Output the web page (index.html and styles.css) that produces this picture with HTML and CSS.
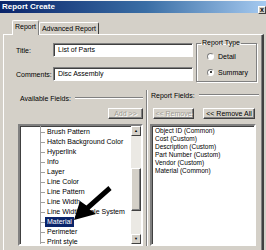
FILE: index.html
```html
<!DOCTYPE html>
<html lang="en">
<head>
    <meta charset="UTF-8">
    <title>Report Create</title>
    <link rel="stylesheet" href="styles.css">
</head>
<body>
    <div class="window">
        <div class="titlebar">
            <span class="title">Report Create</span>
            <span class="close">x</span>
        </div>
        <div class="tabs">
            <div class="tab active">Report</div>
            <div class="tab">Advanced Report</div>
        </div>
        <div class="page">
            <div class="top">
                <div class="fields">
                    <div class="field">
                        <label>Title:</label>
                        <div class="input">List of Parts</div>
                    </div>
                    <div class="field">
                        <label>Comments:</label>
                        <div class="input">Disc Assembly</div>
                    </div>
                </div>
                <fieldset class="group">
                    <legend>Report Type</legend>
                    <div class="radio"><span class="dot"></span>Detail</div>
                    <div class="radio"><span class="dot on"></span>Summary</div>
                </fieldset>
            </div>
            <div class="bottom">
                <div class="panel left">
                    <div class="heading"><span>Available Fields:</span><i class="rule"></i></div>
                    <div class="btnrow end">
                        <button class="btn btn-add" disabled>Add &gt;&gt;</button>
                    </div>
                    <div class="list">
                        <ul class="tree">
                            <li><span>Brush Pattern</span></li>
                            <li><span>Hatch Background Color</span></li>
                            <li><span>Hyperlink</span></li>
                            <li><span>Info</span></li>
                            <li><span>Layer</span></li>
                            <li><span>Line Color</span></li>
                            <li><span>Line Pattern</span></li>
                            <li><span>Line Width</span></li>
                            <li><span>Line Width Scale System</span></li>
                            <li><span class="selected">Material</span></li>
                            <li><span>Perimeter</span></li>
                            <li><span>Print style</span></li>
                        </ul>
                        <div class="scrollbar">
                            <div class="sbtn">&#9650;</div>
                            <div class="track">
                                <div class="thumb"></div>
                            </div>
                            <div class="sbtn">&#9660;</div>
                        </div>
                    </div>
                </div>
                <div class="panel right">
                    <div class="heading"><span>Report Fields:</span><i class="rule"></i></div>
                    <div class="btnrow">
                        <button class="btn btn-remove" disabled>&lt;&lt; Remove</button>
                        <button class="btn btn-remove-all">&lt;&lt; Remove All</button>
                    </div>
                    <div class="list">
                        <ul class="plain">
                            <li>Object ID (Common)</li>
                            <li>Cost (Custom)</li>
                            <li>Description (Custom)</li>
                            <li>Part Number (Custom)</li>
                            <li>Vendor (Custom)</li>
                            <li>Material (Common)</li>
                        </ul>
                    </div>
                </div>
            </div>
        </div>
        <svg class="arrow" width="266" height="250" viewBox="0 0 266 250">
            <polygon points="74,219 80,200 86.4,204.6 108.4,185.1 111.6,188.9 89.6,208.4 96,213" fill="#000"/>
        </svg>
    </div>
</body>
</html>
```

FILE: styles.css
```css
* { box-sizing: border-box; }
body { margin: 0; background: #d4d0c8; font-family: "Liberation Sans", Arial, sans-serif; font-size: 7px; color: #000; }

.window { position: relative; width: 266px; height: 250px; overflow: hidden; background: #d4d0c8; border-top: 1px solid #f4f4f4; }

.titlebar { height: 12px; display: flex; justify-content: space-between; padding-left: 2px; background: linear-gradient(90deg, #0a246a, #3a6ea5 55%, #a6caf0); color: #fff; }
.title { font-weight: bold; font-size: 8px; line-height: 12px; }
.close { align-self: flex-end; width: 8px; height: 8px; margin-bottom: -1px; background: #d4d0c8; color: #000; font-size: 7px; line-height: 6px; text-align: center; font-weight: bold; border: 1px solid; border-color: #fff #404040 #404040 #fff; }

.tabs { display: flex; align-items: flex-end; height: 14px; margin-top: 7px; padding-left: 12px; }
.tab { height: 12px; line-height: 11px; white-space: nowrap; text-align: center; border: 1px solid; border-bottom: none; border-color: #fff #404040 #fff #fff; border-radius: 2px 2px 0 0; }
.tab.active { position: relative; z-index: 1; width: 27px; height: 15px; margin-bottom: -1px; background: #d4d0c8; line-height: 12px; border-right: 1px solid #808080; }
.tab:not(.active) { width: 60px; }

.page { height: 216px; margin-left: 3px; width: 261px; border-top: 1px solid #fff; border-left: 1px solid #fff; border-right: 2px solid #404040; box-shadow: inset -1px 0 #808080; }

.top { display: flex; align-items: flex-start; padding-top: 8px; }
.fields { display: flex; flex-direction: column; gap: 10px; padding-left: 12px; }
.field { display: flex; align-items: center; }
.field label { width: 37px; }
.input { width: 140px; height: 14px; padding-left: 4px; line-height: 12px; background: #fff; border: 1px solid; border-color: #808080 #fff #fff #808080; box-shadow: inset 1px 1px #404040; }

.group { margin: -4px 0 0 3px; width: 61px; height: 43px; padding: 5px 0 0 10px; border: 1px solid #808080; box-shadow: inset 1px 1px #fff, 1px 1px #fff; }
.group legend { padding: 0 1px; margin-left: -6px; line-height: 8px; }
.radio { display: flex; align-items: center; height: 8px; margin-bottom: 8px; }
.dot { position: relative; width: 7px; height: 7px; margin-right: 4px; border-radius: 50%; background: #fff; border: 1px solid; border-color: #808080 #fff #fff #808080; }
.dot.on::after { content: ""; position: absolute; left: 1.5px; top: 1.5px; width: 2px; height: 2px; border-radius: 50%; background: #000; }

.bottom { display: flex; margin-top: 8px; }
.panel.left { width: 139px; padding-left: 14px; }
.panel.right { width: 114px; margin-left: 3px; padding-left: 3px; border-left: 1px solid #808080; box-shadow: inset 1px 0 #fff; }
.heading { display: flex; align-items: center; height: 10px; }
.left .heading { margin-top: 3px; padding-left: 2px; }
.right .heading { margin-top: 0; padding-left: 1px; }
.rule { flex: 1; height: 2px; margin-left: 4px; border-top: 1px solid #808080; border-bottom: 1px solid #fff; }
.right .rule { margin-right: 1px; }

.btnrow { display: flex; gap: 9px; height: 11px; margin-top: 8px; }
.left .btnrow { margin-top: 5px; }
.btnrow.end { justify-content: flex-end; }
.right .btnrow { padding-left: 3px; }
.btn { height: 11px; padding: 0; font-family: inherit; font-size: 7px; line-height: 8px; background: #d4d0c8; color: #000; border: 1px solid; border-color: #fff #404040 #404040 #fff; box-shadow: inset -1px -1px #808080; }
.btn:disabled { color: #a09c94; text-shadow: 1px 1px #fff; }
.btn-add { width: 35px; }
.btn-remove { width: 41px; }
.btn-remove-all { width: 52px; }

.list { display: flex; height: 122px; margin-top: 5px; background: #fff; border: 2px solid; border-color: #808080 #fff #fff #808080; box-shadow: inset 1px 1px #404040; }
.left .list { width: 125px; }
.right .list { width: 106px; }
ul { margin: 0; padding: 0; list-style: none; flex: 1; }

.tree { padding-top: 1px; background: linear-gradient(#a0a0a0, #a0a0a0) no-repeat 20px 0 / 1px 100%; }
.tree li { display: flex; align-items: center; height: 10px; padding-left: 20px; }
.tree li::before { content: ""; width: 5px; height: 1px; background: #a0a0a0; }
.tree li span { padding: 0 2px; line-height: 10px; }
.tree .selected { background: #0a246a; color: #fff; }

.scrollbar { display: flex; flex-direction: column; width: 10px; }
.sbtn { height: 10px; font-size: 4px; line-height: 8px; text-align: center; background: #d4d0c8; border: 1px solid; border-color: #fff #404040 #404040 #fff; }
.track { flex: 1; padding-top: 32px; background: #ebe9e4; }
.thumb { height: 43px; background: #d4d0c8; border: 1px solid; border-color: #fff #404040 #404040 #fff; box-shadow: inset -1px -1px #808080; }

.plain { padding: 1px 0 0 3px; font-size: 6.5px; }
.plain li { height: 8px; line-height: 8px; white-space: nowrap; }

.arrow { position: absolute; left: 0; top: 0; pointer-events: none; }
```
